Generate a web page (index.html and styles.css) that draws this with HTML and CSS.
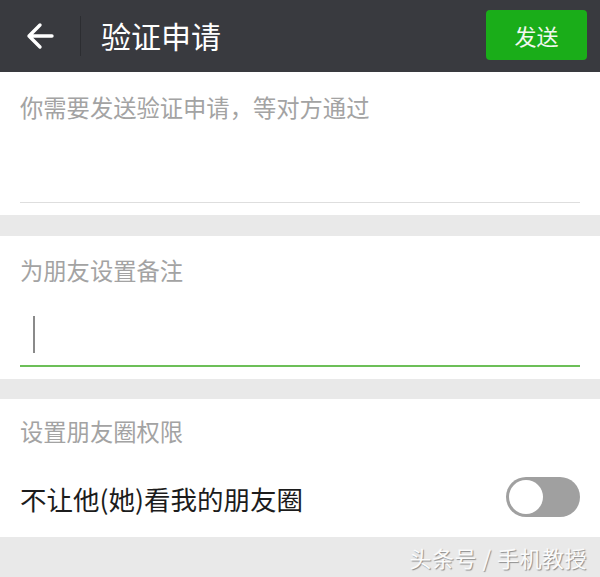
FILE: index.html
```html
<!DOCTYPE html>
<html lang="zh-CN">
<head>
    <meta charset="UTF-8">
    <meta name="viewport" content="width=device-width, initial-scale=1.0">
    <title>验证申请</title>
    <link rel="stylesheet" href="styles.css">
</head>
<body>
    <header class="topbar">
        <button class="back" aria-label="返回">
            <svg width="28" height="28" viewBox="0 0 28 28">
                <path d="M3 14 H26 M14 3 L3 14 L14 25" fill="none" stroke="#fff" stroke-width="3.4" stroke-linecap="round" stroke-linejoin="round"/>
            </svg>
        </button>
        <div class="divider"></div>
        <h1 class="title">验证申请</h1>
        <button class="send">发送</button>
    </header>

    <section class="block first">
        <p class="hint">你需要发送验证申请，等对方通过</p>
        <div class="field"></div>
    </section>

    <section class="block second">
        <p class="hint">为朋友设置备注</p>
        <div class="field active"><span class="caret"></span></div>
    </section>

    <section class="block third">
        <p class="hint">设置朋友圈权限</p>
        <div class="row">
            <span class="row-label">不让他(她)看我的朋友圈</span>
            <div class="switch"><div class="knob"></div></div>
        </div>
    </section>

    <footer class="footer">
        <span class="mark">头条号 / 手机教授</span>
    </footer>
</body>
</html>
```

FILE: styles.css
```css
body {
    margin: 0;
    padding: 0;
    width: 600px;
    height: 577px;
    overflow: hidden;
    background-color: #e9e9e9;
    font-family: "Noto Sans CJK SC", "Noto Sans", sans-serif;
}

.topbar {
    height: 72px;
    background-color: #393a3f;
    display: flex;
    align-items: center;
    padding: 0 13px 0 24px;
    box-sizing: border-box;
}

.back {
    width: 32px;
    height: 32px;
    padding: 0;
    border: none;
    background: transparent;
    display: flex;
    align-items: center;
    justify-content: center;
}

.divider {
    width: 1px;
    height: 40px;
    background-color: #2c2d31;
    margin-left: 24px;
}

.title {
    margin: 0 0 2px 20px;
    color: #fff;
    font-size: 30px;
    font-weight: normal;
    line-height: 36px;
    flex: 1;
}

.send {
    width: 101px;
    height: 50px;
    border: none;
    border-radius: 4px;
    background-color: #1aad19;
    color: #f2f8f0;
    font-family: inherit;
    font-size: 22px;
    margin-bottom: 2px;
}

.block {
    background-color: #fff;
    padding: 0 20px;
}

.block.first {
    padding-top: 20px;
    padding-bottom: 12px;
    margin-bottom: 21px;
}

.block.second {
    padding-top: 19px;
    padding-bottom: 12px;
    margin-bottom: 20px;
}

.block.third {
    padding-top: 17px;
    padding-bottom: 20px;
}

.hint {
    margin: 0;
    font-size: 23.3px;
    line-height: 30px;
    color: #a3a3a3;
}

.field {
    height: 80px;
    border-bottom: 1px solid #dedede;
}

.field.active {
    border-bottom: 2px solid #6cbf58;
    position: relative;
}

.caret {
    position: absolute;
    left: 13px;
    top: 31px;
    width: 2px;
    height: 37px;
    background-color: #8a8a8a;
}

.row {
    margin-top: 31px;
    height: 40px;
    display: flex;
    align-items: center;
    justify-content: space-between;
}

.row-label {
    font-size: 26.5px;
    color: #1c1c1c;
    margin-top: 2px;
}

.switch {
    width: 74px;
    height: 40px;
    border-radius: 20px;
    background-color: #a0a0a0;
    box-sizing: border-box;
    padding: 3px;
}

.knob {
    width: 34px;
    height: 34px;
    border-radius: 50%;
    background-color: #fff;
}

.footer {
    height: 39px;
    display: flex;
    align-items: center;
    justify-content: flex-end;
    padding-right: 13px;
}

.mark {
    font-size: 22px;
    color: #fbfbfb;
    text-shadow: 1px 1px 1px #8c8c8c;
    letter-spacing: 0.5px;
}
```
